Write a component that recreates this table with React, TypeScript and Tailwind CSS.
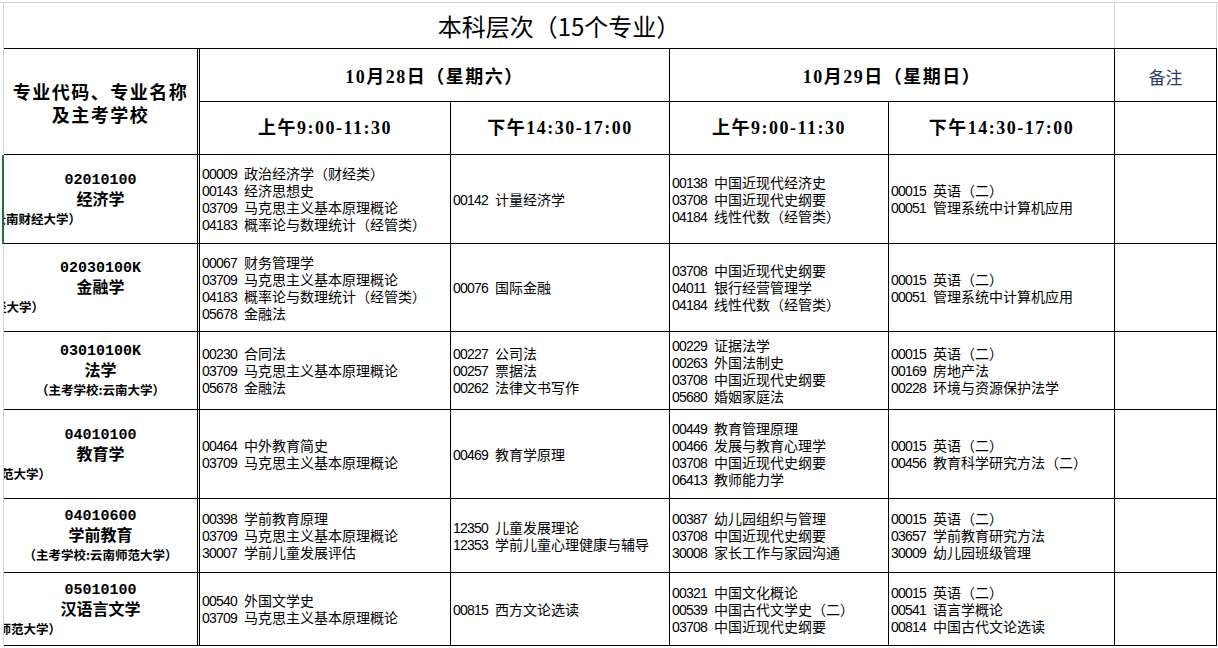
import React from "react";

type Row = {
  code: string;
  name: string;
  school: string;
  clip?: string;
  h: string;
  green?: boolean;
  cols: string[][];
};

const rows: Row[] = [
  {
    code: "02010100",
    name: "经济学",
    school: "（主考学校:云南财经大学）",
    clip: "w-[77px]",
    h: "h-[89px]",
    green: true,
    cols: [
      ["00009 政治经济学（财经类）", "00143 经济思想史", "03709 马克思主义基本原理概论", "04183 概率论与数理统计（经管类）"],
      ["00142 计量经济学"],
      ["00138 中国近现代经济史", "03708 中国近现代史纲要", "04184 线性代数（经管类）"],
      ["00015 英语（二）", "00051 管理系统中计算机应用"],
    ],
  },
  {
    code: "02030100K",
    name: "金融学",
    school: "（主考学校:云南财经大学）",
    clip: "w-[40px]",
    h: "h-[88px]",
    cols: [
      ["00067 财务管理学", "03709 马克思主义基本原理概论", "04183 概率论与数理统计（经管类）", "05678 金融法"],
      ["00076 国际金融"],
      ["03708 中国近现代史纲要", "04011 银行经营管理学", "04184 线性代数（经管类）"],
      ["00015 英语（二）", "00051 管理系统中计算机应用"],
    ],
  },
  {
    code: "03010100K",
    name: "法学",
    school: "（主考学校:云南大学）",
    h: "h-[78px]",
    cols: [
      ["00230 合同法", "03709 马克思主义基本原理概论", "05678 金融法"],
      ["00227 公司法", "00257 票据法", "00262 法律文书写作"],
      ["00229 证据法学", "00263 外国法制史", "03708 中国近现代史纲要", "05680 婚姻家庭法"],
      ["00015 英语（二）", "00169 房地产法", "00228 环境与资源保护法学"],
    ],
  },
  {
    code: "04010100",
    name: "教育学",
    school: "（主考学校:云南师范大学）",
    clip: "w-[47px]",
    h: "h-[89px]",
    cols: [
      ["00464 中外教育简史", "03709 马克思主义基本原理概论"],
      ["00469 教育学原理"],
      ["00449 教育管理原理", "00466 发展与教育心理学", "03708 中国近现代史纲要", "06413 教师能力学"],
      ["00015 英语（二）", "00456 教育科学研究方法（二）"],
    ],
  },
  {
    code: "04010600",
    name: "学前教育",
    school: "（主考学校:云南师范大学）",
    h: "h-[74px]",
    cols: [
      ["00398 学前教育原理", "03709 马克思主义基本原理概论", "30007 学前儿童发展评估"],
      ["12350 儿童发展理论", "12353 学前儿童心理健康与辅导"],
      ["00387 幼儿园组织与管理", "03708 中国近现代史纲要", "30008 家长工作与家园沟通"],
      ["00015 英语（二）", "03657 学前教育研究方法", "30009 幼儿园班级管理"],
    ],
  },
  {
    code: "05010100",
    name: "汉语言文学",
    school: "（主考学校:云南师范大学）",
    clip: "w-[57px]",
    h: "h-[73px]",
    cols: [
      ["00540 外国文学史", "03709 马克思主义基本原理概论"],
      ["00815 西方文论选读"],
      ["00321 中国文化概论", "00539 中国古代文学史（二）", "03708 中国近现代史纲要"],
      ["00015 英语（二）", "00541 语言学概论", "00814 中国古代文论选读"],
    ],
  },
];

const GRID = "grid grid-cols-[196px_251px_219px_219px_226px_102px]";
const HEAD = "font-['Liberation_Serif','Noto_Sans_CJK_SC',serif] font-bold text-[18px] tracking-[1.5px]";
const SCHOOL = "font-['Noto_Sans_CJK_SC',sans-serif] font-bold text-[12.5px] leading-[22px] whitespace-nowrap";

function Lines({ items }: { items: string[] }) {
  return (
    <div className="flex flex-col justify-center overflow-hidden border-r border-b border-black pl-[2px]">
      {items.map((l) => {
        const [c, ...rest] = l.split(" ");
        return (
          <div key={l} className="flex h-[17px] items-baseline whitespace-nowrap leading-[17px]">
            <span className="w-[42px] shrink-0 font-['Liberation_Sans',sans-serif] text-[14px] tracking-[-0.8px]">{c}</span>
            <span className="font-['Noto_Sans_CJK_SC',sans-serif] text-[14px]">{rest.join(" ")}</span>
          </div>
        );
      })}
    </div>
  );
}

export default function App() {
  return (
    <div className="h-[648px] w-[1218px] overflow-hidden bg-white text-black">
      <div className="mt-[2px] border-t border-[#d4d4d4]">
        <div className="ml-[3px] w-[1214px] border-l border-[#d4d4d4]">
          {/* title row */}
          <div className="grid h-[46px] grid-cols-[1111px_102px] border-b border-black">
            <div className="flex items-center justify-center border-r border-[#d4d4d4] font-['Noto_Sans_CJK_SC',sans-serif] text-[24px]">
              本科层次（15个专业）
            </div>
            <div className="border-r border-[#d4d4d4]" />
          </div>

          {/* header */}
          <div className={`${GRID} grid-rows-[53px_53px]`}>
            <div className={`row-span-2 flex flex-col items-center justify-center border-b border-r-[3px] border-double border-black pt-[7px] leading-[23px] ${HEAD}`}>
              <div>专业代码、专业名称</div>
              <div>及主考学校</div>
            </div>
            <div className={`col-span-2 flex items-center justify-center border-r border-b border-black pt-[5px] ${HEAD}`}>
              10月28日（星期六）
            </div>
            <div className={`col-span-2 flex items-center justify-center border-r border-b border-black pt-[5px] ${HEAD}`}>
              10月29日（星期日）
            </div>
            <div className="flex items-center justify-center border-r border-b border-black pt-[3px] font-['Noto_Sans_CJK_SC',sans-serif] text-[17px] text-[#2b3a67]">
              备注
            </div>
            <div className={`flex items-center justify-center border-r border-b border-black pt-[1px] ${HEAD}`}>上午9:00-11:30</div>
            <div className={`flex items-center justify-center border-r border-b border-black pt-[1px] ${HEAD}`}>下午14:30-17:00</div>
            <div className={`flex items-center justify-center border-r border-b border-black pt-[1px] ${HEAD}`}>上午9:00-11:30</div>
            <div className={`flex items-center justify-center border-r border-b border-black pt-[1px] ${HEAD}`}>下午14:30-17:00</div>
            <div className="border-r border-b border-black" />
          </div>

          {/* data rows */}
          {rows.map((r) => (
            <div key={r.code} className={`${GRID} ${r.h}`}>
              <div
                className={`flex flex-col items-center justify-center overflow-hidden border-b border-r-[3px] border-double border-black pt-[3px] ${
                  r.green ? "shadow-[-2px_0_0_#217346]" : ""
                }`}
              >
                <div className="font-['Liberation_Mono',monospace] text-[15px] font-bold leading-[17px]">{r.code}</div>
                <div className="font-['Noto_Sans_CJK_SC',sans-serif] text-[16px] font-bold leading-[19px]">{r.name}</div>
                {r.clip ? (
                  <div className={`flex justify-end self-start ${r.clip}`}>
                    <span className={`shrink-0 ${SCHOOL}`}>{r.school}</span>
                  </div>
                ) : (
                  <div className={SCHOOL}>{r.school}</div>
                )}
              </div>
              {r.cols.map((c, i) => (
                <Lines key={i} items={c} />
              ))}
              <div className="border-r border-b border-black" />
            </div>
          ))}
        </div>
      </div>
    </div>
  );
}
